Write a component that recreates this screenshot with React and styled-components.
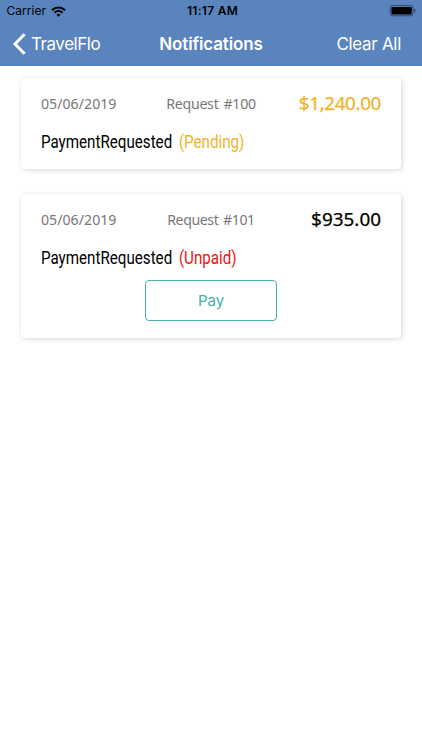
import React from 'react'
import styled, { createGlobalStyle } from 'styled-components'

const GlobalStyle = createGlobalStyle`
* {
  box-sizing: border-box;
}

body {
  margin: 0;
  background: #fff;
  overflow: hidden;
}
`

const Screen = styled.div`
display: flex;
flex-direction: column;
width: 100%;
min-height: 100vh;
font-family: Inter, 'Liberation Sans', sans-serif;
color: #000;
`

const Header = styled.header`
height: 65.5px;
background: #5a84be;
`

const StatusBar = styled.div`
display: grid;
grid-template-columns: 1fr auto 1fr;
align-items: center;
height: 22px;
padding: 0 6px;
font-size: 12px;
line-height: 22px;
`

const Carrier = styled.div`
display: flex;
align-items: center;
gap: 5px;
padding-left: 0.6px;
`

const Clock = styled.div`
padding-left: 3px;
font-weight: 600;
letter-spacing: 0.3px;
`

const Battery = styled.div`
display: flex;
justify-content: flex-end;
`

const NavBar = styled.nav`
display: grid;
grid-template-columns: 1fr auto 1fr;
align-items: center;
height: 43px;
padding: 0 12px;
line-height: 43px;
color: #fff;
`

const NavButton = styled.button`
display: flex;
align-items: center;
justify-self: ${props => props.$align || 'start'};
gap: 5px;
padding: 0;
border: 0;
background: none;
color: inherit;
font-family: inherit;
font-size: 17px;
letter-spacing: ${props => props.$spacing || '0'};
margin-right: ${props => props.$align ? '9px' : '0'};
`

const Title = styled.h1`
margin: 0;
padding-top: 1px;
font-size: 17px;
font-weight: 600;
letter-spacing: -0.15px;
`

const List = styled.main`
display: flex;
flex-direction: column;
gap: 25px;
padding: 12px 21px 0;
`

const Card = styled.article`
height: ${props => props.$height};
padding: 14px 20px 0;
border-radius: 4px;
background: #fff;
box-shadow: 1px 1px 5px rgba(0, 0, 0, 0.17);
`

const Summary = styled.div`
display: grid;
grid-template-columns: 110px 120px 1fr;
align-items: center;
height: 24px;
font-family: 'Noto Sans', sans-serif;
font-size: 14.2px;
line-height: 20px;
color: #777;
white-space: nowrap;
`

const Request = styled.span`
text-align: center;
word-spacing: 1.5px;
letter-spacing: ${props => props.$spacing};
`

const Amount = styled.span`
padding-bottom: 2px;
text-align: right;
font-size: 18.9px;
line-height: 22px;
-webkit-text-stroke: 0.25px currentColor;
letter-spacing: ${props => props.$spacing};
color: ${props => props.$color};
`

const Status = styled.p`
display: flex;
gap: 8px;
width: max-content;
margin: 14px 0 0;
font-family: Roboto, sans-serif;
font-size: 18px;
line-height: 24px;
transform: scaleX(0.842);
transform-origin: left;
`

const State = styled.span`
color: ${props => props.$color};
`

const PayButton = styled.button`
display: block;
width: 132px;
height: 41px;
margin: 10px auto 0;
border: 1px solid #48aeaa;
border-radius: 4px;
background: #fff;
color: #48aeaa;
font-family: Inter, sans-serif;
font-size: 15px;
`

const WifiIcon = () => (
  <svg width="15" height="11" viewBox="0 0 15 11" fill="none" stroke="#000" strokeWidth="2">
    <path d="M1 4.2a9.2 9.2 0 0 1 13 0" />
    <path d="M3.5 6.8a5.6 5.6 0 0 1 8 0" />
    <path d="M5.4 8.7a3 3 0 0 1 4.2 0L7.5 10.8z" fill="#000" stroke="none" />
  </svg>
)

const BatteryIcon = () => (
  <svg width="27" height="12" viewBox="0 0 27 12">
    <rect x="1.1" y="0.6" width="23" height="10.2" rx="2.6" fill="none" stroke="#000" strokeOpacity="0.45" />
    <rect x="2.4" y="2" width="20.4" height="7.4" rx="1.3" />
    <path d="M25.3 3.7v4q1.4-.7 1.4-2t-1.4-2" fillOpacity="0.45" />
  </svg>
)

const BackIcon = () => (
  <svg width="14" height="22" viewBox="0 0 14 22" fill="none" stroke="#fff" strokeWidth="3">
    <path d="M12.6 1.2 3 11l9.6 9.8" />
  </svg>
)

const notifications = [
  {
    id: 100,
    date: '05/06/2019',
    amount: '$1,240.00',
    amountColor: '#f0b429',
    amountSpacing: '-0.4px',
    requestSpacing: '-0.27px',
    state: '(Pending)',
    stateColor: '#f0b429',
    height: '91px',
  },
  {
    id: 101,
    date: '05/06/2019',
    amount: '$935.00',
    amountColor: '#000',
    amountSpacing: '0',
    requestSpacing: '-0.45px',
    state: '(Unpaid)',
    stateColor: '#f01010',
    height: '144px',
    payable: true,
  },
]

const App = () => {
  return (
    <Screen>
      <GlobalStyle />
      <Header>
        <StatusBar>
          <Carrier>Carrier <WifiIcon /></Carrier>
          <Clock>11:17 AM</Clock>
          <Battery><BatteryIcon /></Battery>
        </StatusBar>
        <NavBar>
          <NavButton $spacing="-0.45px"><BackIcon />TravelFlo</NavButton>
          <Title>Notifications</Title>
          <NavButton $align="end" $spacing="-0.3px">Clear All</NavButton>
        </NavBar>
      </Header>
      <List>
        {notifications.map(item => (
          <Card key={item.id} $height={item.height}>
            <Summary>
              <span>{item.date}</span>
              <Request $spacing={item.requestSpacing}>Request #{item.id}</Request>
              <Amount $color={item.amountColor} $spacing={item.amountSpacing}>{item.amount}</Amount>
            </Summary>
            <Status>
              <span>PaymentRequested</span>
              <State $color={item.stateColor}>{item.state}</State>
            </Status>
            {item.payable && <PayButton>Pay</PayButton>}
          </Card>
        ))}
      </List>
    </Screen>
  )
}

export default App
